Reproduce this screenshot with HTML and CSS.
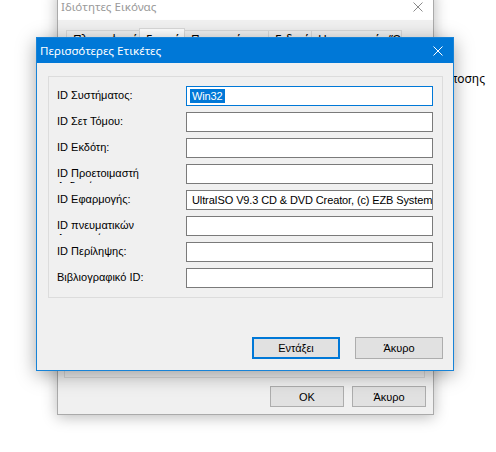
FILE: index.html
```html
<!DOCTYPE html>
<html lang="el">
<head>
<meta charset="utf-8">
<title>Περισσότερες Ετικέτες</title>
<link rel="stylesheet" href="styles.css">
</head>
<body>
<div class="desktop">
  <div class="behind-text">Ρυθμίσεις Απόκρυψης Διαποσης</div>

  <div class="window back">
    <div class="back-title">
      <span class="back-title-text">Ιδιότητες Εικόνας</span>
      <svg class="close-icon" width="10" height="10" viewBox="0 0 10 10"><path d="M0.5 0.5 L9.5 9.5 M9.5 0.5 L0.5 9.5" stroke="#8a8a8a" stroke-width="1"/></svg>
    </div>
    <div class="back-body">
      <div class="tabs">
        <div class="tab t1">Πληροφορίες</div>
        <div class="tab active t2">Γενικά</div>
        <div class="tab t3">Προηγμένες</div>
        <div class="tab t4">Ειδικά</div>
        <div class="tab t5">Ημερομηνία/Ώρα</div>
      </div>
      <div class="tab-panel"></div>
      <div class="back-buttons">
        <button class="btn back-btn">OK</button>
        <button class="btn back-btn">Άκυρο</button>
      </div>
    </div>
  </div>

  <div class="window front">
    <div class="front-title">
      <span class="front-title-text">Περισσότερες Ετικέτες</span>
      <svg class="close-icon" width="10" height="10" viewBox="0 0 10 10"><path d="M0.5 0.5 L9.5 9.5 M9.5 0.5 L0.5 9.5" stroke="#ffffff" stroke-width="1"/></svg>
    </div>
    <div class="front-body">
      <div class="group">
        <div class="label">ID Συστήματος:</div>
        <div class="field focused"><span class="sel">Win32</span></div>
        <div class="label">ID Σετ Τόμου:</div>
        <div class="field"></div>
        <div class="label">ID Εκδότη:</div>
        <div class="field"></div>
        <div class="label">ID Προετοιμαστή Δεδομένων:</div>
        <div class="field"></div>
        <div class="label">ID Εφαρμογής:</div>
        <div class="field"><span class="value">UltraISO V9.3 CD &amp; DVD Creator, (c) EZB Systems, Inc.</span></div>
        <div class="label">ID πνευματικών Δικαιωμάτων:</div>
        <div class="field"></div>
        <div class="label">ID Περίληψης:</div>
        <div class="field"></div>
        <div class="label">Βιβλιογραφικό ID:</div>
        <div class="field"></div>
      </div>
      <div class="front-buttons">
        <button class="btn front-btn default">Εντάξει</button>
        <button class="btn front-btn">Άκυρο</button>
      </div>
    </div>
  </div>
</div>
</body>
</html>
```

FILE: styles.css
```css
html, body {
  margin: 0;
  padding: 0;
  background: #ffffff;
}

.desktop {
  position: relative;
  width: 496px;
  height: 452px;
  overflow: hidden;
  background: #ffffff;
  font-family: "Liberation Sans", Arial, sans-serif;
  font-size: 11px;
  color: #000000;
}

.behind-text {
  position: absolute;
  right: 11px;
  top: 72px;
  font-family: "Noto Sans", "Open Sans", sans-serif;
  font-size: 12px;
  line-height: 14px;
  white-space: nowrap;
  color: #000;
}

.window {
  position: absolute;
  box-sizing: border-box;
  display: flex;
  flex-direction: column;
}

/* ---------- background window ---------- */
.back {
  left: 57px;
  top: -10px;
  width: 377px;
  height: 425px;
  border: 1px solid #aaaaaa;
  background: #f0f0f0;
  box-shadow: 0 2px 14px rgba(0, 0, 0, 0.28);
}

.back-title {
  height: 29px;
  flex: none;
  background: #ffffff;
  display: flex;
  align-items: flex-end;
  justify-content: space-between;
  padding: 0 10px 0 3px;
}

.back-title-text {
  font-family: "Noto Sans", "Open Sans", sans-serif;
  font-size: 11.6px;
  line-height: 16px;
  color: #9a9a9a;
  margin-bottom: 5px;
}

.back-title .close-icon {
  margin-bottom: 8px;
}

.back-body {
  flex: 1;
  display: flex;
  flex-direction: column;
  padding: 8px 7px 7px 6px;
}

.tabs {
  display: flex;
  height: 21px;
  padding-left: 2px;
  flex: none;
}

.tab {
  box-sizing: border-box;
  margin-top: 2px;
  height: 19px;
  border: 1px solid #d9d9d9;
  border-bottom: none;
  border-right: none;
  background: #f0f0f0;
  font-family: "Noto Sans", "Open Sans", sans-serif;
  font-size: 12px;
  line-height: 16px;
  padding: 1px 0 0 6px;
  white-space: nowrap;
  overflow: hidden;
  color: #000;
}

.tab.t1 { width: 73px; }
.tab.t2 { width: 46px; }
.tab.t3 { width: 83px; }
.tab.t4 { width: 43px; }
.tab.t5 { width: 91px; border-right: 1px solid #d9d9d9; }

.tab.active {
  margin-top: 0;
  height: 21px;
  background: #ffffff;
  border-right: 1px solid #d9d9d9;
  padding-top: 3px;
}

.tab.active + .tab {
  border-left: none;
}

.tab-panel {
  flex: 1;
  border: 1px solid #d9d9d9;
  background: #f0f0f0;
  margin-right: 1px;
}

.back-buttons {
  display: flex;
  justify-content: flex-end;
  gap: 8px;
  margin-top: 8px;
  flex: none;
}

.btn {
  box-sizing: border-box;
  font-family: "Liberation Sans", Arial, sans-serif;
  font-size: 11px;
  color: #000;
  background: #e1e1e1;
  border: 1px solid #adadad;
  padding: 0;
  margin: 0;
  border-radius: 0;
}

.back-btn {
  width: 74px;
  height: 21px;
}

/* ---------- front window ---------- */
.front {
  left: 36px;
  top: 37px;
  width: 418px;
  height: 334px;
  border: 1px solid #1883d7;
  background: #f0f0f0;
  box-shadow: 0 4px 18px rgba(0, 0, 0, 0.35);
}

.front-title {
  height: 25px;
  flex: none;
  background: #0078d7;
  display: flex;
  align-items: center;
  justify-content: space-between;
  padding: 0 10px 0 3px;
}

.front-title-text {
  font-family: "Noto Sans", "Open Sans", sans-serif;
  font-size: 11.6px;
  line-height: 16px;
  color: #ffffff;
}

.front-title .close-icon {
  margin-top: 1px;
}

.front-body {
  flex: 1;
  display: flex;
  flex-direction: column;
  padding: 13px 10px 11px 11px;
}

.group {
  box-sizing: border-box;
  height: 222px;
  border: 1px solid #dcdcdc;
  padding: 9px 8px 0 8px;
  display: grid;
  grid-template-columns: 129px 247px;
  grid-auto-rows: 20px;
  row-gap: 6px;
}

.label {
  height: 19px;
  overflow: hidden;
  padding-top: 3px;
  box-sizing: border-box;
  line-height: 13px;
  white-space: normal;
  padding-right: 20px;
}

.field {
  box-sizing: border-box;
  height: 20px;
  border: 1px solid #7a7a7a;
  background: #ffffff;
  padding: 0 0 0 5px;
  line-height: 18px;
  white-space: nowrap;
  overflow: hidden;
  letter-spacing: -0.12px;
}

.field.focused {
  border-color: #0078d7;
  padding-left: 3px;
}

.sel {
  background: #0078d7;
  color: #ffffff;
  padding: 1px 2px;
}

.front-buttons {
  display: flex;
  justify-content: flex-end;
  gap: 15px;
  margin-top: auto;
  padding-right: 0;
}

.front-btn {
  width: 88px;
  height: 22px;
}

.front-btn.default {
  border: 2px solid #0078d7;
}
```
